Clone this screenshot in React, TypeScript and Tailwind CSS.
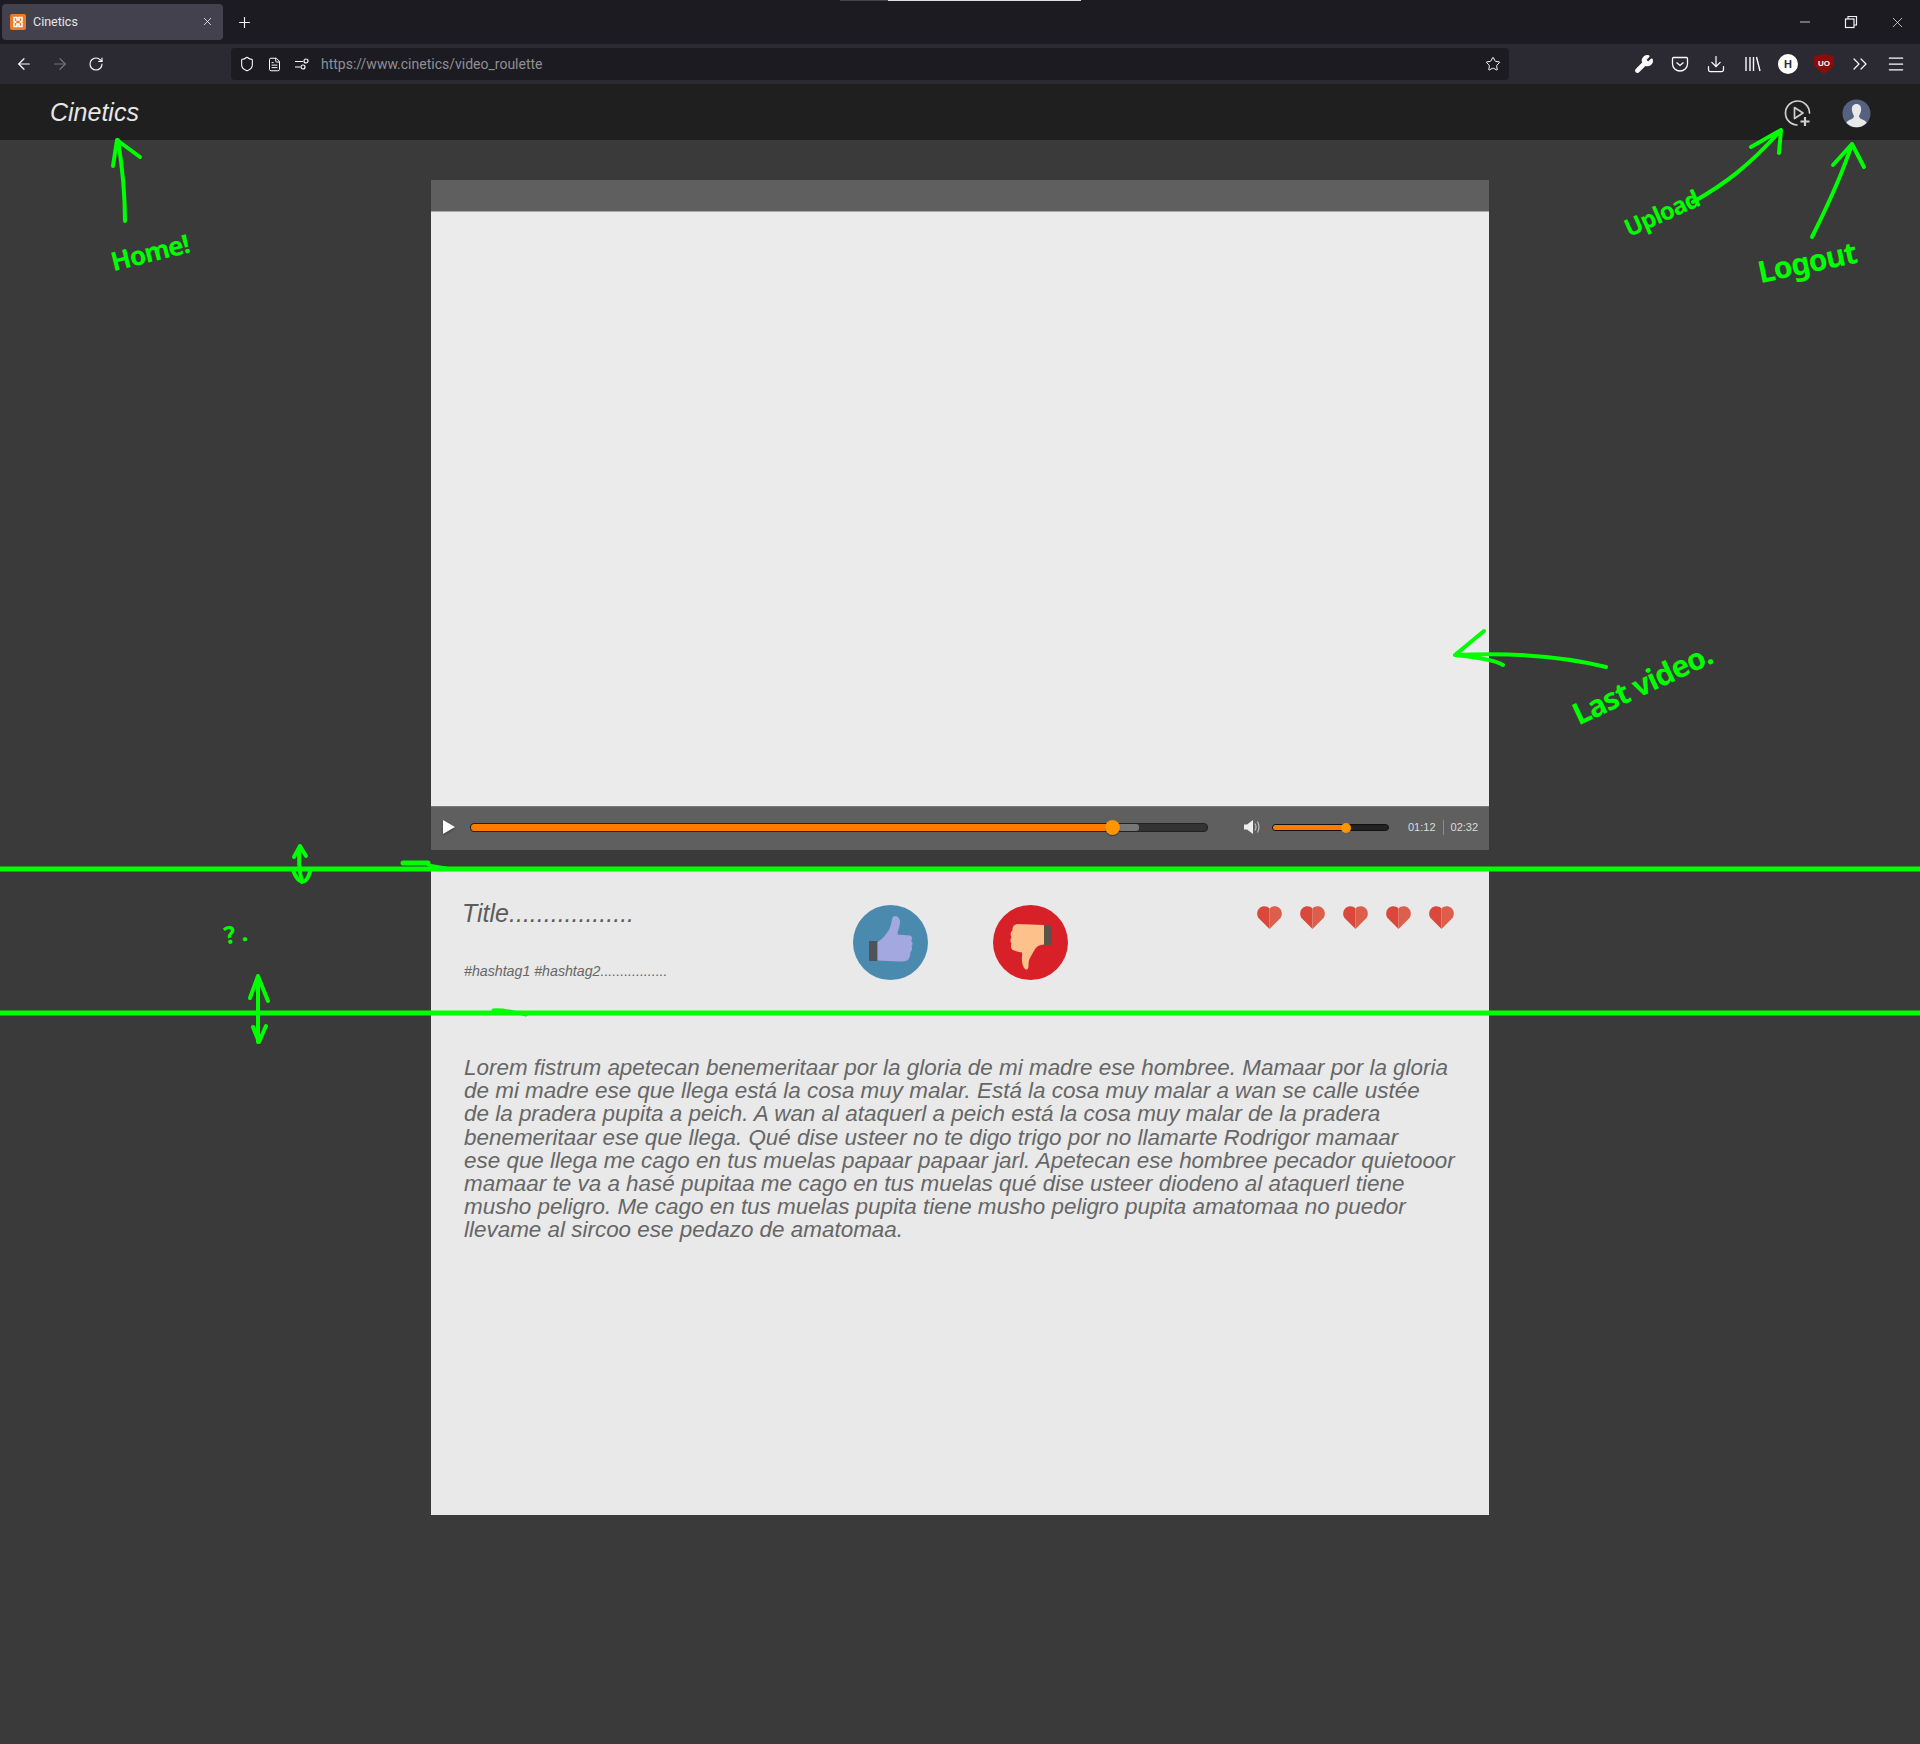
import React from "react";
import {
  ArrowLeft,
  ArrowRight,
  ChevronsRight,
  Download,
  FileText,
  Menu,
  Minus,
  Plus,
  RotateCw,
  Shield,
  Star,
  Wrench,
  X,
} from "lucide-react";

const loremLines = [
  "Lorem fistrum apetecan benemeritaar por la gloria de mi madre ese hombree. Mamaar por la gloria",
  "de mi madre ese que llega está la cosa muy malar. Está la cosa muy malar a wan se calle ustée",
  "de la pradera pupita a peich. A wan al ataquerl a peich está la cosa muy malar de la pradera",
  "benemeritaar ese que llega. Qué dise usteer no te digo trigo por no llamarte Rodrigor mamaar",
  "ese que llega me cago en tus muelas papaar papaar jarl. Apetecan ese hombree pecador quietooor",
  "mamaar te va a hasé pupitaa me cago en tus muelas qué dise usteer diodeno al ataquerl tiene",
  "musho peligro. Me cago en tus muelas pupita tiene musho peligro pupita amatomaa no puedor",
  "llevame al sircoo ese pedazo de amatomaa.",
];

const Heart = () => (
  <svg width="25" height="23" viewBox="0 0 25 23">
    <path
      d="M12.5 23 L1.5 12 C-1 8.5 0 2 5.5 .5 C8.5 0 11 1 12.5 2.5 Z"
      fill="#d9483b"
    />
    <path
      d="M12.5 23 L23.5 12 C26 8.5 25 2 19.5 .5 C16.5 0 14 1 12.5 2.5 Z"
      fill="#dc5e4b"
    />
  </svg>
);

const ThumbUp = () => (
  <svg width="75" height="75" viewBox="0 0 75 75">
    <circle cx="37.5" cy="37.5" r="37.5" fill="#4a8aaf" />
    <rect x="16" y="36" width="8.5" height="20" fill="#4f5259" />
    <path
      d="M24.5 37 C28 35 31 32 33 29 C36 26 37.5 22 38.5 17 C39 14 39.5 11 42 11 C45 11 47.5 14 47 18 C46.5 23 44.5 26 44.5 29.5 L57 30.5 C59.5 31 59.5 35 58 36 C60 37 60 40 58.5 41 C59.5 43 59 46 57.5 47 C57.5 50 56.5 53 55 55 C53 56.5 50 56.5 47 56.5 L24.5 55.5 Z"
      fill="#a3a8e0"
    />
  </svg>
);

const ThumbDown = () => (
  <svg width="75" height="75" viewBox="0 0 75 75">
    <circle cx="37.5" cy="37.5" r="37.5" fill="#d72027" />
    <rect x="51" y="20" width="8" height="20" fill="#5c5249" />
    <path
      d="M51 20 L24 19 C21 19.5 19 22 19.5 25.5 C17.5 27 17 30 18.5 32 C17 34 17 37 18.5 38 C17.5 41 18 44 20 45 C23 46.5 26 47 29 47.5 C29.5 50 28.5 53 29 56 C29.5 60 31 64 33 64.5 C35 65 35.5 63 35.5 60 C35.5 57 36 54 37.5 52 C40 48 42 43 45 41 C47 40 49 40 51 39.5 Z"
      fill="#fdc18b"
    />
  </svg>
);

const Favicon = () => (
  <svg width="16" height="16" viewBox="0 0 16 16">
    <rect width="16" height="16" rx="2" fill="#ef7a23" />
    <path
      d="M4 3.5 H7 V6 L9 6 V3.5 H12 V7 L10.5 8 L12 9 V12.5 H9 V10 H7 V12.5 H4 V9 L5.5 8 L4 7 Z"
      fill="none"
      stroke="#fff"
      strokeWidth="1.6"
    />
  </svg>
);

const Strip = () => (
  <div className="flex h-11 items-center bg-[#1c1b22] pl-[2px]">
    <div className="mt-[-1px] flex h-9 w-[221px] items-center rounded-[4px] bg-[#42414d] pl-2 pr-2 text-white">
      <Favicon />
      <span className="ml-[7px] mt-[2px] flex-1 font-['Roboto',sans-serif] text-[12.5px] text-[#e6e6e8]">Cinetics</span>
      <X size={13} strokeWidth={1.4} className="mr-[1px]" />
    </div>
    <Plus size={17} strokeWidth={1.6} className="ml-[13px] text-[#f2f2f2]" />
    <div className="ml-auto flex items-center gap-[30px] pr-[14px] text-[#f2f2f2]">
      <Minus size={16} strokeWidth={1.2} />
      <svg width="16" height="16" viewBox="0 0 16 16" fill="none" stroke="currentColor" strokeWidth="1.2">
        <rect x="2.5" y="5" width="8.5" height="8.5" />
        <path d="M5 5 V2.5 H13.5 V11 H11" />
      </svg>
      <X size={17} strokeWidth={1} />
    </div>
  </div>
);

const Toolbar = () => (
  <div className="flex h-10 items-center bg-[#2b2a33] pl-[15px] pr-[14px] text-[#fbfbfe]">
    <ArrowLeft size={18} strokeWidth={1.6} />
    <ArrowRight size={18} strokeWidth={1.6} className="ml-[18px] text-[#73727a]" />
    <RotateCw size={16} strokeWidth={1.7} className="ml-[19px]" />
    <div className="ml-[127px] flex h-8 w-[1278px] items-center rounded-[4px] bg-[#1c1b22] pl-[8px] pr-[6px]">
      <Shield size={16} strokeWidth={1.6} />
      <FileText size={15} strokeWidth={1.6} className="ml-[12px]" />
      <svg width="15" height="12" viewBox="0 0 15 12" fill="none" stroke="currentColor" strokeWidth="1.2" className="ml-[13px]">
        <path d="M0 3.5 H8 M0 9 H5" />
        <circle cx="11" cy="3" r="2" />
        <circle cx="8" cy="9" r="2" />
      </svg>
      <span className="ml-[11px] font-['Roboto',sans-serif] text-[14px] text-[#8f8f94]">
        https://www.cinetics/video_roulette
      </span>
      <Star size={16} strokeWidth={1.5} className="ml-auto mr-[2px]" />
    </div>
    <div className="ml-auto flex items-center gap-[16px]">
      <Wrench size={20} strokeWidth={1.4} fill="currentColor" />
      <svg width="20" height="20" viewBox="0 0 20 20" fill="none" stroke="currentColor" strokeWidth="1.3">
        <path d="M3.5 3.5 H16.5 Q17.5 3.5 17.5 5 V10 C17.5 14 14 17 10 17 C6 17 2.5 14 2.5 10 V5 Q2.5 3.5 3.5 3.5 Z M6.5 8.5 L10 11.5 L13.5 8.5" />
      </svg>
      <Download size={20} strokeWidth={1.5} />
      <svg width="20" height="20" viewBox="0 0 20 20" fill="none" stroke="currentColor" strokeWidth="1.4">
        <path d="M4 3 V17 M8 3 V17 M11.5 3 V17 M14.5 3 L18 17" />
      </svg>
      <div className="flex h-5 w-5 items-center justify-center rounded-full bg-white font-['Liberation_Sans',sans-serif] text-[11px] font-bold text-[#2b2a33]">
        H
      </div>
      <div className="flex h-5 w-5 items-center justify-center bg-[#8a0c0c] font-['Liberation_Sans',sans-serif] text-[8px] font-bold text-white [clip-path:polygon(50%_0,100%_12%,100%_60%,50%_100%,0_60%,0_12%)]">
        UO
      </div>
      <ChevronsRight size={24} strokeWidth={1.2} className="-mx-[2px]" />
      <Menu size={20} strokeWidth={1.5} />
    </div>
  </div>
);

const NavBar = () => (
  <div className="flex h-14 items-center bg-[#1f1f1f] pl-[50px] pr-[49px] pt-[2px]">
    <span className="text-[25px] italic text-[#e6e6e6]">Cinetics</span>
    <div className="ml-auto flex items-center gap-[30px]">
      <svg width="28" height="28" viewBox="0 0 28 28" fill="none" stroke="#cfcfcf" strokeWidth="1.7">
        <path d="M13 26 A12 12 0 1 1 25.5 14" strokeLinecap="round" />
        <path d="M10.5 8.5 L19 14 L10.5 19.5 Z" strokeLinejoin="round" />
        <path d="M21 18 V27 M16.5 22.5 H25.5" strokeWidth="2.2" />
      </svg>
      <svg width="29" height="29" viewBox="0 0 29 29">
        <circle cx="14.5" cy="14.5" r="14" fill="#566180" />
        <path
          d="M14.5 5 C10.5 5 9.5 8.5 10 11.5 C10.3 14 11.5 16 12 17 C12 19 10 20 7.5 21 C5.5 22 4.5 23 4.5 24 A14 14 0 0 0 24.5 24 C24.5 23 23.5 22 21.5 21 C19 20 17 19 17 17 C17.5 16 18.7 14 19 11.5 C19.5 8.5 18.5 5 14.5 5 Z"
          fill="#e9e9e9"
        />
      </svg>
    </div>
  </div>
);

const Controls = () => (
  <div className="flex h-11 items-center border-t border-[#7a7a7a] bg-[#5f5f5f] pb-[3px] pl-[12px] text-[#e6e6e6]">
    <svg width="12" height="14" viewBox="0 0 12 14" className="drop-shadow-[0_1px_1px_rgba(0,0,0,0.4)]">
      <path d="M0 0 L12 7 L0 14 Z" fill="#fff" />
    </svg>
    <div className="relative ml-[15px] h-[9px] w-[738px] rounded-[4px] border border-[#222] bg-[#333]">
      <div className="absolute left-[641px] top-0 h-full w-[27px] rounded-r-[3px] bg-[#777]" />
      <div className="absolute left-0 top-0 h-full w-[642px] rounded-l-[4px] bg-[#ff7b00]" />
      <div className="absolute left-[634px] top-[-4px] h-[15px] w-[15px] rounded-full bg-[#ff9500] shadow-[0_1px_1px_rgba(0,0,0,0.4)]" />
    </div>
    <svg width="16" height="14" viewBox="0 0 16 14" className="ml-[36px]">
      <path d="M0 4.5 H3 L9 0 V14 L3 9.5 H0 Z" fill="#eee" />
      <path d="M11 3.5 Q13 7 11 10.5 M13.5 1.5 Q16.5 7 13.5 12.5" fill="none" stroke="#bbb" strokeWidth="1.2" />
    </svg>
    <div className="relative ml-[12px] h-[7px] w-[117px] rounded-[4px] border border-[#111] bg-[#222]">
      <div className="absolute left-0 top-0 h-full w-[74px] rounded-l-[3px] bg-[#ff7b00]" />
      <div className="absolute left-[68px] top-[-2px] h-[10px] w-[10px] rounded-full bg-[#ff9500]" />
    </div>
    <span className="ml-[19px] text-[11px] text-[#dcdcdc]">01:12</span>
    <div className="mx-[7px] h-[15px] w-px bg-[#8c8c8c]" />
    <span className="text-[11px] text-[#dcdcdc]">02:32</span>
  </div>
);

const InfoPanel = () => (
  <div className="flex h-[645px] flex-col bg-[#e9e9e9] text-[#666]">
    <div className="flex h-[143px]">
      <div className="w-[422px] pl-[31px] pt-[29px]">
        <div className="text-[25px] italic leading-[29px] text-[#5c5c5c]">Title..................</div>
        <div className="mt-[35px] pl-[2px] text-[14.2px] italic leading-[16px]">#hashtag1 #hashtag2.................</div>
      </div>
      <div className="flex gap-[65px] pt-[35px]">
        <ThumbUp />
        <ThumbDown />
      </div>
      <div className="ml-auto flex gap-[18px] pr-[35px] pt-[36px]">
        <Heart />
        <Heart />
        <Heart />
        <Heart />
        <Heart />
      </div>
    </div>
    <div className="pl-[33px] pt-[43px] text-[22.45px] italic leading-[23.2px]">
      {loremLines.map((line) => (
        <div key={line} className="whitespace-nowrap">
          {line}
        </div>
      ))}
    </div>
  </div>
);

// green marker scribbles on top of the mockup
const Annotations = () => (
  <>
    <svg
      width="1920"
      height="1744"
      viewBox="0 0 1920 1744"
      fill="none"
      stroke="#00ff00"
      strokeLinecap="round"
      strokeLinejoin="round"
      className="pointer-events-none absolute left-0 top-0"
    >
      <g strokeWidth="5">
        <path d="M0 869 H1920" />
        <path d="M0 1013 H1920" />
      </g>
      <g strokeWidth="4">
        <path d="M125 221 C125 190 122 165 118 140 M113 166 L117 140 L140 157" />
        <path d="M1693 202 C1725 184 1750 165 1781 130 M1751 147 L1781 130 L1779 153" />
        <path d="M1812 237 C1828 205 1842 175 1852 144 M1833 165 L1852 144 L1864 167" />
        <path d="M1606 667 C1570 658 1520 652 1455 655 M1484 631 L1455 655 C1475 657 1495 660 1503 665" />
        <path d="M300 846 C298 860 299 870 302 882 M294 857 L300 846 L306 856 M293 870 C298 884 306 886 310 872" />
        <path d="M258 976 V1042 M250 998 L258 976 L268 1001 M253 1027 L259 1042 L266 1026" />
        <path d="M403 863 H428" strokeWidth="5" />
        <path d="M428 865 L452 869" strokeWidth="3" />
        <path d="M493 1010 C505 1009 515 1012 526 1015" strokeWidth="3" />
      </g>
    </svg>
    <span className="absolute left-[110px] top-[235px] -rotate-[14deg] font-['Noto_Sans',sans-serif] text-[26px] font-bold leading-[34px] tracking-[-1px] text-[#00ff00]">
      Home!
    </span>
    <span className="absolute left-[1622px] top-[196px] -rotate-[24deg] font-['Noto_Sans',sans-serif] text-[24px] font-bold leading-[34px] tracking-[-1px] text-[#00ff00]">
      Upload
    </span>
    <span className="absolute left-[1757px] top-[245px] -rotate-[12deg] font-['Noto_Sans',sans-serif] text-[30px] font-bold leading-[34px] tracking-[-1px] text-[#00ff00]">
      Logout
    </span>
    <span className="absolute left-[1567px] top-[665px] -rotate-[25deg] font-['Noto_Sans',sans-serif] text-[30px] font-bold leading-[38px] tracking-[-1px] text-[#00ff00]">
      Last video.
    </span>
    <span className="absolute left-[224px] top-[918px] -rotate-[10deg] font-['Noto_Sans',sans-serif] text-[24px] font-bold leading-[30px] tracking-[5px] text-[#00ff00]">
      ?.
    </span>
  </>
);

const App: React.FC = () => {
  return (
    <div className="relative h-[1744px] w-[1920px] overflow-hidden bg-[#3a3a3a] font-['Liberation_Sans',sans-serif]">
      <div className="absolute left-[840px] top-0 h-px w-[48px] bg-[#444]" />
      <div className="absolute left-[888px] top-0 h-px w-[193px] bg-[#e0e0e0]" />
      <Strip />
      <Toolbar />
      <NavBar />
      <main className="mx-auto mt-10 w-[1058px]">
        <div className="h-[32px] border-b border-[#a8a8a8] bg-[#5f5f5f]" />
        <div className="h-[594px] bg-[#ebebeb]" />
        <Controls />
        <div className="h-5" />
        <InfoPanel />
      </main>
      <Annotations />
    </div>
  );
};

export default App;
